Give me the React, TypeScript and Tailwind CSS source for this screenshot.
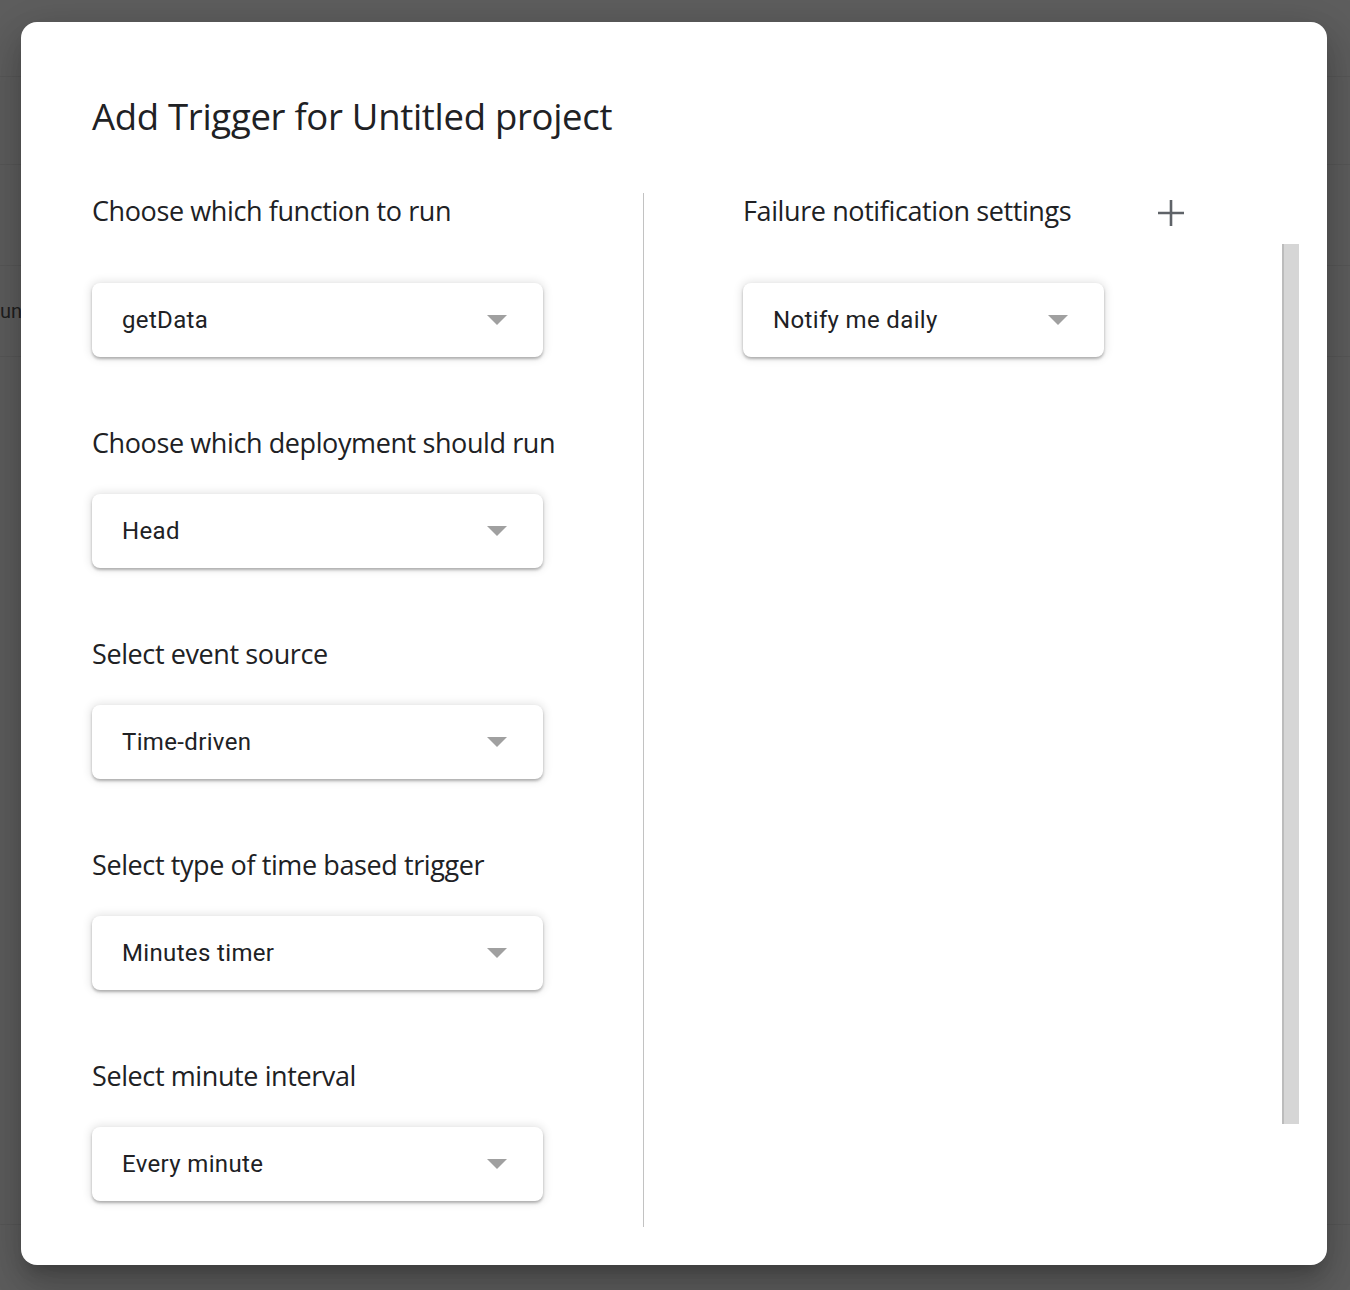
const leftFields = [
  { label: "Choose which function to run", value: "getData" },
  { label: "Choose which deployment should run", value: "Head" },
  { label: "Select event source", value: "Time-driven" },
  { label: "Select type of time based trigger", value: "Minutes timer" },
  { label: "Select minute interval", value: "Every minute" },
];

function Caret() {
  return (
    <svg width="20" height="10" viewBox="0 0 20 10" className="shrink-0">
      <path d="M0 0 L20 0 L10 10 Z" fill="#a0a0a0" />
    </svg>
  );
}

function Select({ value, width }: { value: string; width: string }) {
  return (
    <div
      className={`${width} h-[74px] bg-white rounded-[8px] flex items-center justify-between pl-[30px] pr-[36px] shadow-[0_2px_3px_rgba(0,0,0,0.28),0_0_9px_2px_rgba(0,0,0,0.1)]`}
    >
      <span className="text-[24px] text-[#202124] font-['Roboto',sans-serif] tracking-[0.35px]">
        {value}
      </span>
      <Caret />
    </div>
  );
}

export default function App() {
  return (
    <div className="relative w-[1350px] h-[1290px] overflow-hidden bg-[#5e5e5e] font-['Roboto',sans-serif]">
      {/* page behind the overlay */}
      <div className="flex flex-col">
        <div className="h-[77px] border-b border-[#585858]" />
        <div className="h-[88px] border-b border-[#585858]" />
        <div className="h-[101px] border-b border-[#585858]" />
        <div className="h-[91px] border-b border-[#585858] flex items-center">
          <span className="text-[20px] text-[#1f1f1f]">un</span>
        </div>
        <div className="h-[868px] border-b border-[#585858]" />
      </div>

      {/* dialog */}
      <div className="absolute left-[21px] top-[22px] w-[1306px] h-[1243px] bg-white rounded-[16px] shadow-[0_11px_15px_-7px_rgba(0,0,0,0.2),0_24px_38px_3px_rgba(0,0,0,0.14),0_9px_46px_8px_rgba(0,0,0,0.12)] flex flex-col pl-[71px] pr-[28px]">
        <h1 className="mt-[72px] text-[36.5px] leading-[44px] font-medium text-[#202124] font-['Open_Sans',sans-serif] tracking-[-0.3px]">
          Add Trigger for Untitled project
        </h1>

        <div className="flex mt-[55px] flex-1 min-h-0 pb-[38px]">
          {/* left column */}
          <div className="w-[551px] shrink-0 flex flex-col pt-[2px]">
            {leftFields.map((f, i) => (
              <div key={f.label} className={`flex flex-col shrink-0 ${i === 0 ? "" : "mt-[70px]"}`}>
                <div className="h-[32px] text-[27px] leading-[32px] text-[#202124] font-['Open_Sans',sans-serif] tracking-[-0.4px]">
                  {f.label}
                </div>
                <div className={i === 0 ? "mt-[56px]" : "mt-[35px]"}>
                  <Select value={f.value} width="w-[451px]" />
                </div>
              </div>
            ))}
          </div>

          <div className="w-px bg-[#c2c2c2]" />

          {/* right column */}
          <div className="flex-1 flex pl-[99px]">
            <div className="flex flex-col pt-[2px]">
              <div className="flex items-center">
                <div className="h-[32px] text-[27px] leading-[32px] text-[#202124] font-['Open_Sans',sans-serif] tracking-[-0.4px]">
                  Failure notification settings
                </div>
                <svg width="26" height="26" viewBox="0 0 26 26" className="ml-[87px] mt-[3px]">
                  <path d="M13 0 V26 M0 13 H26" stroke="#5f6368" strokeWidth="2.6" />
                </svg>
              </div>
              <div className="mt-[56px]">
                <Select value="Notify me daily" width="w-[361px]" />
              </div>
            </div>
            <div className="flex-1" />
            <div className="mt-[51px] mb-[103px] w-[17px] bg-[#d6d6d6] border-l-2 border-[#bcbcbc]" />
          </div>
        </div>
      </div>
    </div>
  );
}
